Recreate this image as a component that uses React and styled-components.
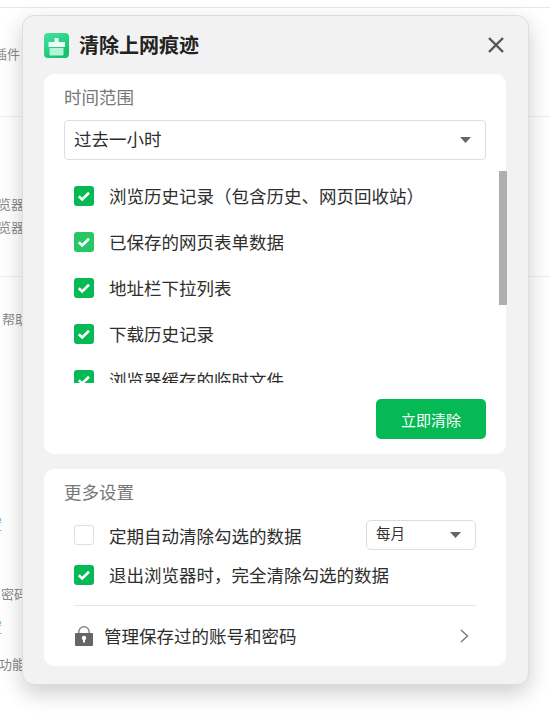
import React from "react";
import styled, { createGlobalStyle } from "styled-components";

const Global = createGlobalStyle`
  html, body { margin: 0; padding: 0; background: #fff; }
  * { box-sizing: border-box; }
  body { font-family: "Noto Sans CJK SC", "Liberation Sans", sans-serif; }
`;

const Page = styled.div`
  position: relative;
  width: 550px;
  height: 715px;
  overflow: hidden;
  background: #fff;
  padding-top: 7px;
`;
const BackSection = styled.section`
  height: ${(p) => p.$height}px;
  border-top: 1px solid ${(p) => p.$line || "#eee"};
`;
const Note = styled.div`
  margin-top: ${(p) => p.$gap}px;
  margin-left: ${(p) => p.$left}px;
  font-size: 13px;
  line-height: 18px;
  height: 18px;
  white-space: nowrap;
  color: ${(p) => (p.$link ? "#5aa5f0" : "#888")};
`;

const Dialog = styled.div`
  position: absolute;
  left: 22px;
  top: 15px;
  width: 507px;
  height: 670px;
  display: flex;
  flex-direction: column;
  gap: 15px;
  padding: 0 22px 18px 21px;
  background: #f2f2f2;
  border: 1px solid #dedede;
  border-radius: 12px;
  box-shadow: 0 8px 22px rgba(0, 0, 0, 0.2);
`;
const Header = styled.header`
  height: 58px;
  margin-bottom: -15px;
  display: flex;
  align-items: center;
  gap: 10px;
`;
const Title = styled.h1`
  margin: 0;
  flex: 1;
  font-size: 20px;
  line-height: 28px;
  font-weight: 700;
  color: #222;
`;
const CloseButton = styled.button`
  display: flex;
  width: 18px;
  height: 18px;
  padding: 0;
  margin-right: 1px;
  border: 0;
  background: none;
`;
const Card = styled.div`
  position: relative;
  height: ${(p) => p.$height}px;
  padding-top: 11px;
  background: #fff;
  border-radius: 10px;
`;
const Label = styled.div`
  padding-left: 20px;
  font-size: 17.5px;
  line-height: 24px;
  color: #777;
`;
const SelectBox = styled.div`
  display: flex;
  align-items: center;
  justify-content: space-between;
  margin: 11px 20px 0;
  height: 40px;
  padding: 0 14px 4px 9px;
  border: 1px solid #ddd;
  border-radius: 4px;
  font-size: 17.5px;
  color: #2e2e2e;
`;
const List = styled.div`
  height: 210px;
  margin-top: 13px;
  padding-left: 30px;
  overflow: hidden;
`;
const Row = styled.label`
  display: flex;
  align-items: center;
  gap: 15px;
  height: ${(p) => p.$height || 46}px;
  margin-top: ${(p) => p.$top || 0}px;
  font-size: 17.5px;
  color: #2e2e2e;
  white-space: nowrap;
`;
const RowText = styled.span`
  margin-bottom: ${(p) => p.$lift || 0}px;
`;
const Box = styled.span`
  flex: none;
  display: flex;
  width: 20px;
  height: 20px;
  border-radius: 3px;
  background: ${(p) => (p.$off ? "#fff" : p.$soft ? "#28c765" : "#05b955")};
  border: ${(p) => (p.$off ? "1.5px solid #e0e0e0" : "0")};
`;
const Thumb = styled.div`
  position: absolute;
  left: 455px;
  top: 97px;
  width: 8px;
  height: 134px;
  background: #aeaeae;
`;
const Footer = styled.div`
  display: flex;
  justify-content: flex-end;
  margin: 16px 20px 0 0;
`;
const ClearButton = styled.button`
  width: 110px;
  height: 40px;
  border: 0;
  border-radius: 5px;
  background: #05b955;
  color: #fff;
  font: inherit;
  font-size: 15px;
`;
const Settings = styled.div`
  padding: 0 30px;
`;
const SmallSelect = styled.div`
  margin-left: auto;
  display: flex;
  align-items: center;
  justify-content: space-between;
  width: 110px;
  height: 30px;
  padding: 0 14px 5px 9px;
  border: 1px solid #ddd;
  border-radius: 5px;
  font-size: 14.5px;
  color: #333;
`;
const Divider = styled.div`
  height: 1px;
  margin-top: 15px;
  background: #e6e6e6;
`;
const Manage = styled.div`
  display: flex;
  align-items: center;
  gap: 11px;
  height: 60px;
  padding: 0 7px 0 1px;
  font-size: 17.5px;
  color: #2e2e2e;
`;
const ManageText = styled.span`
  flex: 1;
  margin-bottom: 2px;
`;
const CaretIcon = styled.svg`
  margin-top: ${(p) => p.$drop}px;
`;

const Check = () => (
  <svg width="20" height="20" viewBox="0 0 20 20" fill="none">
    <path d="M4.8 10.2 8.2 13.4 15 6.8" stroke="#fff" strokeWidth="2.6" />
  </svg>
);
const Option = ({ off, soft, lift, children, extra, ...rest }) => (
  <Row {...rest}>
    <Box $off={off} $soft={soft}>{!off && <Check />}</Box>
    <RowText $lift={lift}>{children}</RowText>
    {extra}
  </Row>
);
const Caret = ({ drop }) => (
  <CaretIcon $drop={drop} width="11" height="6" viewBox="0 0 11 6"><path d="M0 0H11L5.5 6Z" fill="#666" /></CaretIcon>
);
const Logo = () => (
  <svg width="25" height="25" viewBox="0 0 25 25">
    <defs>
      <linearGradient id="logo" x1="0" y1="0" x2="0.6" y2="1">
        <stop offset="0" stopColor="#45e2a2" />
        <stop offset="1" stopColor="#12c26c" />
      </linearGradient>
    </defs>
    <rect width="25" height="25" rx="4" fill="url(#logo)" />
    <path d="M10.5 5H14.5V9H21V14H4.5V9H10.5Z" fill="#effcf6" />
    <path d="M5.5 15H19.5V21.5Q19.5 22.5 18.5 22.5H6.5Q5.5 22.5 5.5 21.5Z" fill="#b6f2d7" />
  </svg>
);
const Close = () => (
  <svg width="18" height="18" viewBox="0 0 18 18" fill="none">
    <path d="M2 2 16 16M16 2 2 16" stroke="#555" strokeWidth="2.4" />
  </svg>
);
const Lock = () => (
  <svg width="18" height="20" viewBox="0 0 18 20" fill="none">
    <path d="M3.8 8V6A5.2 5.2 0 0 1 14.2 6V8" stroke="#888" strokeWidth="1.5" />
    <rect y="7" width="18" height="13" rx="1" fill="#666" />
    <circle cx="9" cy="12" r="2.2" fill="#fff" />
    <rect x="8" y="12" width="2" height="4.5" fill="#fff" />
  </svg>
);
const Chevron = () => (
  <svg width="9" height="14" viewBox="0 0 9 14" fill="none">
    <path d="M1 1 7.5 7 1 13" stroke="#777" strokeWidth="1.4" />
  </svg>
);

export default function App() {
  return (
    <Page>
      <Global />
      <BackSection $height={109} $line="#e8e8e8">
        <Note $gap={37} $left={-6}>插件，</Note>
      </BackSection>
      <BackSection $height={160}>
        <Note $gap={78} $left={-2}>览器</Note>
        <Note $gap={5} $left={-2}>览器</Note>
      </BackSection>
      <BackSection $height={438}>
        <Note $gap={33} $left={2}>帮助</Note>
        <Note $gap={187} $left={-24} $link>设置</Note>
        <Note $gap={52} $left={1}>密码</Note>
        <Note $gap={15} $left={-24} $link>设置</Note>
        <Note $gap={19} $left={-1}>功能</Note>
      </BackSection>

      <Dialog>
        <Header>
          <Logo />
          <Title>清除上网痕迹</Title>
          <CloseButton aria-label="关闭"><Close /></CloseButton>
        </Header>
        <Card $height={380}>
          <Label>时间范围</Label>
          <SelectBox>过去一小时<Caret drop={4} /></SelectBox>
          <List>
            <Option lift={2}>浏览历史记录（包含历史、网页回收站）</Option>
            <Option lift={2} soft>已保存的网页表单数据</Option>
            <Option lift={2}>地址栏下拉列表</Option>
            <Option lift={2}>下载历史记录</Option>
            <Option lift={2}>浏览器缓存的临时文件</Option>
          </List>
          <Thumb />
          <Footer><ClearButton>立即清除</ClearButton></Footer>
        </Card>
        <Card $height={197}>
          <Label>更多设置</Label>
          <Settings>
            <Option off $height={30} $top={16} extra={<SmallSelect>每月<Caret drop={5} /></SmallSelect>}>
              定期自动清除勾选的数据
            </Option>
            <Option lift={2} $height={30} $top={10}>退出浏览器时，完全清除勾选的数据</Option>
            <Divider />
            <Manage>
              <Lock />
              <ManageText>管理保存过的账号和密码</ManageText>
              <Chevron />
            </Manage>
          </Settings>
        </Card>
      </Dialog>
    </Page>
  );
}
